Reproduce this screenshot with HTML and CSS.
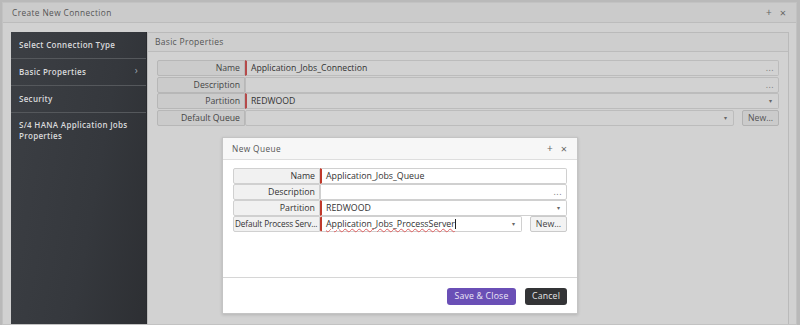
FILE: index.html
```html
<!DOCTYPE html>
<html>
<head>
<meta charset="utf-8">
<link rel="stylesheet" href="styles.css">
</head>
<body>
<div class="window">
  <div class="titlebar">
    <span class="title">Create New Connection</span>
    <span class="tools"><span class="plus">+</span><span class="close">×</span></span>
  </div>
  <div class="wbody">
    <nav class="sidebar">
      <div class="nav-item">Select Connection Type</div>
      <div class="nav-item">Basic Properties <span class="chev">›</span></div>
      <div class="nav-item">Security</div>
      <div class="nav-item last">S/4 HANA Application Jobs Properties</div>
    </nav>
    <section class="panel">
      <div class="panel-head">Basic Properties</div>
      <div class="form">
        <div class="row">
          <div class="label">Name</div>
          <div class="field req">Application_Jobs_Connection<span class="dots">...</span></div>
        </div>
        <div class="row">
          <div class="label">Description</div>
          <div class="field">&nbsp;<span class="dots">...</span></div>
        </div>
        <div class="row">
          <div class="label">Partition</div>
          <div class="field req">REDWOOD<span class="caret">▾</span></div>
        </div>
        <div class="row">
          <div class="label">Default Queue</div>
          <div class="field short">&nbsp;<span class="caret">▾</span></div>
          <div class="btn-new">New...</div>
        </div>
      </div>
    </section>
  </div>
</div>

<div class="modal">
  <div class="modal-head">
    <span class="title">New Queue</span>
    <span class="tools"><span class="plus">+</span><span class="close">×</span></span>
  </div>
  <div class="modal-body">
    <div class="row">
      <div class="label">Name</div>
      <div class="field req">Application_Jobs_Queue</div>
    </div>
    <div class="row">
      <div class="label">Description</div>
      <div class="field">&nbsp;<span class="dots">...</span></div>
    </div>
    <div class="row">
      <div class="label">Partition</div>
      <div class="field req">REDWOOD<span class="caret">▾</span></div>
    </div>
    <div class="row">
      <div class="label tight">Default Process Serv...</div>
      <div class="field req short"><span class="spell">Application_Jobs_ProcessServer</span><span class="cursor"></span><span class="caret">▾</span></div>
      <div class="btn-new">New...</div>
    </div>
  </div>
  <div class="modal-foot">
    <button class="btn primary">Save &amp; Close</button>
    <button class="btn dark">Cancel</button>
  </div>
</div>
</body>
</html>
```
FILE: styles.css
```css
* { box-sizing: border-box; }
html, body { margin: 0; padding: 0; }
body {
  width: 800px;
  height: 325px;
  overflow: hidden;
  background: #b9b9b9;
  font-family: "Open Sans", "DejaVu Sans", sans-serif;
  font-size: 8px;
  color: #444;
  position: relative;
}
.window {
  margin: 2px 3px 0 2px;
  height: 323px;
  background: #d1d1d1;
  border: 1px solid #c2c2c2;
  display: flex;
  flex-direction: column;
}
.titlebar {
  height: 20px;
  flex: none;
  background: #cbcbcb;
  border-bottom: 1px solid #bcbcbc;
  display: flex;
  align-items: center;
  justify-content: space-between;
  padding: 0 10px 1px 9px;
}
.title { letter-spacing: 0.4px; color: #555; font-size: 8.3px; }
.tools { display: flex; gap: 8px; color: #666; font-size: 10px; }
.tools .close { font-size: 11px; }
.wbody {
  flex: 1;
  display: flex;
  padding: 9px 7px 0 8px;
  min-height: 0;
}
.sidebar {
  width: 136px;
  flex: none;
  background: linear-gradient(100deg, #3c3f44 0%, #35383d 60%, #2d2f33 100%);
  border-right: 1px solid #2a2c30;
}
.nav-item {
  height: 27px;
  border-bottom: 1px solid #55585c;
  color: #d9dadc;
  font-weight: 600;
  letter-spacing: 0.3px;
  padding: 7px 8px 0 8px;
  display: flex;
  justify-content: space-between;
}
.nav-item.last { border-bottom: none; height: auto; padding-top: 6px; line-height: 11px; }
.chev { color: #9aa3b0; font-weight: 400; font-size: 10px; line-height: 8px; }
.panel {
  flex: 1;
  border: 1px solid #bababa;
  border-bottom: none;
  background: #d2d2d2;
}
.panel-head {
  height: 19px;
  border-bottom: 1px solid #bcbcbc;
  background: #cecece;
  padding: 3px 7px 0;
  letter-spacing: 0.3px;
  color: #555;
  font-size: 8.5px;
}
.form {
  padding: 8px 9px 0 9px;
  display: flex;
  flex-direction: column;
  gap: 0.6px;
}
.row {
  display: flex;
  height: 16px;
  align-items: stretch;
  font-size: 8.7px;
}
.label {
  width: 88px;
  flex: none;
  background: #cbcbcb;
  border: 1px solid #b7b7b7;
  border-radius: 2px 0 0 2px;
  text-align: right;
  padding: 1px 4px 0 2px;
  color: #444;
  white-space: nowrap;
  overflow: hidden;
}
.label.tight { padding: 1px 1px 0 1px; font-size: 8.2px; letter-spacing: -0.1px; text-align: left; }
.field {
  flex: 1;
  position: relative;
  background: #d2d2d2;
  border: 1px solid #bcbcbc;
  border-radius: 0 2px 2px 0;
  padding: 1px 4px 0 5px;
  color: #333;
  white-space: nowrap;
  display: flex;
}
.field.req { border-left: 2px solid #b54a4a; padding-left: 4px; }
.field.short { margin-right: 8px; border-radius: 2px; }
.dots { margin-left: auto; color: #777; letter-spacing: 0.5px; }
.caret { margin-left: auto; color: #666; font-size: 6px; padding-top: 2px; padding-right: 2px; }
.btn-new {
  width: 37px;
  flex: none;
  border: 1px solid #b2b2b2;
  border-radius: 2px;
  background: #cbcbcb;
  color: #555;
  text-align: center;
  padding-top: 1px;
}

/* Modal dialog overlaying the window */
.modal {
  position: absolute;
  left: 222px;
  top: 137px;
  width: 356px;
  height: 177px;
  background: #fff;
  border: 1px solid #c4c4c4;
  box-shadow: 0 1px 3px rgba(0,0,0,0.15);
  display: flex;
  flex-direction: column;
}
.modal-head {
  height: 22px;
  flex: none;
  background: #f7f7f7;
  border-bottom: 1px solid #dedede;
  display: flex;
  align-items: center;
  justify-content: space-between;
  padding: 0 10px 1px 9px;
}
.modal-head .title { color: #555; }
.modal-body {
  flex: 1;
  padding: 8px 10px 0 10px;
  display: flex;
  flex-direction: column;
  gap: 0.5px;
  border-bottom: 1px solid #d6d6d6;
}
.modal .row { height: 15.5px; font-size: 8.8px; }
.modal .label {
  width: 87px;
  background: #f1f1f1;
  border-color: #d0d0d0;
  color: #333;
}
.modal .field {
  background: #fff;
  border-color: #d0d0d0;
}
.modal .field.req { border-left-color: #c0392b; }
.modal .btn-new {
  background: #f3f3f3;
  border-color: #cacaca;
  color: #444;
}
.spell {
  text-decoration: underline wavy #e06060;
  text-decoration-thickness: 1px;
  text-underline-offset: 1px;
}
.cursor { width: 1px; height: 10px; background: #222; margin-top: 1px; }
.modal-foot {
  height: 35px;
  flex: none;
  display: flex;
  justify-content: flex-end;
  align-items: center;
  gap: 9px;
  padding: 1px 10px 0 0;
}
.btn {
  font-family: "Open Sans", "DejaVu Sans", sans-serif;
  font-size: 8.7px;
  height: 17px;
  border: none;
  border-radius: 3px;
  padding: 0 6px;
  letter-spacing: 0.2px;
}
.btn.primary { background: #6a4fb6; color: #ece8f7; width: 69px; }
.btn.dark { background: #333436; color: #e6e6e6; width: 42px; }
```
